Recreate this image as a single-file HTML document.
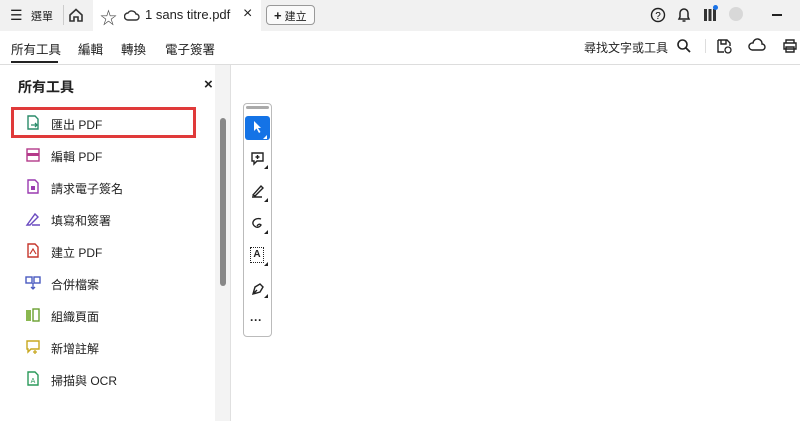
<!DOCTYPE html>
<html><head><meta charset="utf-8"><style>
*{margin:0;padding:0;box-sizing:border-box}
body{width:800px;height:421px;overflow:hidden;background:#fff;font-family:"Liberation Sans","Noto Sans CJK TC",sans-serif;color:#222;position:relative}
.a{position:absolute}
.t{font-size:12px}
</style></head><body>
<div class="a" style="left:0;top:0;width:800px;height:31px;background:#f1f1f1"></div>
<div class="a" style="left:93px;top:0;width:168px;height:31px;background:#fff"></div>
<div class="a t" style="left:10px;top:7px;font-size:14px">☰</div>
<div class="a" style="left:31px;top:8px;font-size:11px">選單</div>
<div class="a" style="left:63px;top:5px;width:1px;height:20px;background:#ccc"></div>
<svg class="a" style="left:68px;top:7px" width="16" height="16" viewBox="0 0 16 16"><path d="M2 8 L8 2.5 L14 8 V14 H10 V10 H6 V14 H2Z" fill="none" stroke="#333" stroke-width="1.6"/></svg>
<div class="a" style="left:100px;top:4px;font-size:17px;color:#444">☆</div>
<svg class="a" style="left:124px;top:8px" width="16" height="14" viewBox="0 0 16 14"><path d="M4 12 H12 A3 3 0 0 0 12 6 A4.5 4.5 0 0 0 4 5 A3.5 3.5 0 0 0 4 12Z" fill="none" stroke="#333" stroke-width="1.4"/></svg>
<div class="a" style="left:145px;top:7px;font-size:13px">1 sans titre.pdf</div>
<div class="a" style="left:243px;top:5px;font-size:16px">×</div>
<div class="a" style="left:266px;top:5px;width:49px;height:20px;border:1px solid #999;border-radius:4px;background:#fafafa;font-size:11px;padding:2px 0 0 7px"><b style="font-size:13px">+</b> 建立</div>
<svg class="a" style="left:650px;top:7px" width="16" height="16"><circle cx="8" cy="8" r="6.5" fill="none" stroke="#222" stroke-width="1.4"/><text x="8" y="12" font-size="10" text-anchor="middle" font-family="Liberation Sans">?</text></svg>
<svg class="a" style="left:676px;top:6px" width="16" height="18"><path d="M3 13 H13 L12 11 V7 A4 4 0 0 0 4 7 V11Z M6.5 15 H9.5" fill="none" stroke="#222" stroke-width="1.5"/></svg>
<div class="a" style="left:704px;top:9px;width:12px;height:12px;background:repeating-linear-gradient(90deg,#333 0 3px,transparent 3px 4.5px);"></div>
<div class="a" style="left:713px;top:5px;width:5px;height:5px;border-radius:50%;background:#1a73e8"></div>
<div class="a" style="left:729px;top:7px;width:14px;height:14px;border-radius:50%;background:#d8d8d8"></div>
<div class="a" style="left:772px;top:14px;width:10px;height:2px;background:#222"></div>

<div class="a" style="left:0;top:64px;width:800px;height:1px;background:#ddd"></div>
<div class="a" style="left:11px;top:39px;font-size:12.5px">所有工具</div>
<div class="a" style="left:11px;top:61px;width:47px;height:2px;background:#222"></div>
<div class="a" style="left:78px;top:39px;font-size:12.5px">編輯</div>
<div class="a" style="left:121px;top:39px;font-size:12.5px">轉換</div>
<div class="a" style="left:165px;top:39px;font-size:12.5px">電子簽署</div>
<div class="a" style="left:584px;top:39px;font-size:12px">尋找文字或工具</div>
<svg class="a" style="left:676px;top:38px" width="16" height="16"><circle cx="6.5" cy="6.5" r="4.5" fill="none" stroke="#222" stroke-width="1.6"/><path d="M10 10 L14 14" stroke="#222" stroke-width="1.8"/></svg>
<div class="a" style="left:705px;top:39px;width:1px;height:14px;background:#ddd"></div>
<svg class="a" style="left:716px;top:38px" width="16" height="16"><path d="M2 2 H11 L14 5 V8 M2 2 V14 H8 M5 2 V6 H10 V2" fill="none" stroke="#222" stroke-width="1.4"/><circle cx="12" cy="12" r="3" fill="none" stroke="#222" stroke-width="1.3"/></svg>
<svg class="a" style="left:748px;top:38px" width="18" height="16"><path d="M4 12 H14 A3 3 0 0 0 14 6 A4.5 4.5 0 0 0 5 5 A3.5 3.5 0 0 0 4 12" fill="none" stroke="#222" stroke-width="1.4"/></svg>
<svg class="a" style="left:781px;top:38px" width="18" height="16"><path d="M5 5 V2 H13 V5 M3 5 H15 V11 H3Z M5 9 H13 V14 H5Z" fill="none" stroke="#222" stroke-width="1.4"/></svg>

<div class="a" style="left:215px;top:65px;width:15px;height:356px;background:#f3f3f3"></div>
<div class="a" style="left:220px;top:118px;width:6px;height:168px;background:#888;border-radius:3px"></div>
<div class="a" style="left:230px;top:65px;width:1px;height:356px;background:#e0e0e0"></div>

<div class="a" style="left:18px;top:77px;font-size:14px;font-weight:bold">所有工具</div>
<div class="a" style="left:204px;top:76px;font-size:15px;font-weight:bold">×</div>
<div class="a" style="left:11px;top:107px;width:185px;height:31px;border:3px solid #e03a3a"></div>

<svg class="a" style="left:25px;top:115px" width="16" height="16"><path d="M3 1 H10 L13 4 V14 H3Z" fill="none" stroke="#2a8c6a" stroke-width="1.4"/><path d="M6 10 H12 M10 8 L12 10 L10 12" fill="none" stroke="#2a8c6a" stroke-width="1.3"/></svg>
<div class="a t" style="left:51px;top:116px">匯出 PDF</div>
<svg class="a" style="left:25px;top:147px" width="16" height="16"><rect x="2" y="2" width="12" height="12" fill="none" stroke="#b43a8a" stroke-width="1.4"/><rect x="2" y="6" width="12" height="3" fill="#b43a8a"/></svg>
<div class="a t" style="left:51px;top:148px">編輯 PDF</div>
<svg class="a" style="left:25px;top:179px" width="16" height="16"><path d="M3 1 H10 L13 4 V14 H3Z" fill="none" stroke="#9a3ab0" stroke-width="1.4"/><rect x="6" y="7" width="4" height="4" fill="#9a3ab0"/></svg>
<div class="a t" style="left:51px;top:180px">請求電子簽名</div>
<svg class="a" style="left:25px;top:211px" width="16" height="16"><path d="M2 14 L10 3 L13 6 L5 14 Z M7 14 H15" fill="none" stroke="#6b4bc0" stroke-width="1.4"/></svg>
<div class="a t" style="left:51px;top:212px">填寫和簽署</div>
<svg class="a" style="left:25px;top:243px" width="16" height="16"><path d="M3 1 H10 L13 4 V14 H3Z" fill="none" stroke="#c6362c" stroke-width="1.4"/><path d="M5 11 L8 6 L11 11" fill="none" stroke="#c6362c" stroke-width="1.2"/></svg>
<div class="a t" style="left:51px;top:244px">建立 PDF</div>
<svg class="a" style="left:25px;top:275px" width="16" height="16"><rect x="1" y="2" width="6" height="6" fill="none" stroke="#4a5ac0" stroke-width="1.4"/><rect x="9" y="2" width="6" height="6" fill="none" stroke="#4a5ac0" stroke-width="1.4"/><path d="M8 8 V14 M6 12 L8 14 L10 12" fill="none" stroke="#4a5ac0" stroke-width="1.3"/></svg>
<div class="a t" style="left:51px;top:276px">合併檔案</div>
<svg class="a" style="left:25px;top:307px" width="16" height="16"><rect x="1" y="3" width="5" height="11" fill="#8ab850"/><rect x="8" y="2" width="6" height="12" fill="none" stroke="#6aa030" stroke-width="1.4"/></svg>
<div class="a t" style="left:51px;top:308px">組織頁面</div>
<svg class="a" style="left:25px;top:339px" width="16" height="16"><path d="M2 2 H14 V10 H6 L3 13 V10 H2Z" fill="none" stroke="#c8a820" stroke-width="1.4"/><path d="M10 11 V15 M8 13 H12" stroke="#c8a820" stroke-width="1.3"/></svg>
<div class="a t" style="left:51px;top:340px">新增註解</div>
<svg class="a" style="left:25px;top:371px" width="16" height="16"><path d="M3 1 H10 L13 4 V14 H3Z" fill="none" stroke="#2a9a5a" stroke-width="1.4"/><text x="8" y="12" font-size="7" text-anchor="middle" fill="#2a9a5a" font-family="Liberation Sans">A</text></svg>
<div class="a t" style="left:51px;top:372px">掃描與 OCR</div>

<div class="a" style="left:243px;top:103px;width:29px;height:234px;border:1px solid #bbb;border-radius:4px;background:#fff"></div>
<div class="a" style="left:246px;top:106px;width:23px;height:3px;background:#aaa;border-radius:2px"></div>
<div class="a" style="left:245px;top:116px;width:25px;height:24px;background:#1473e6;border-radius:3px"></div>
<svg class="a" style="left:251px;top:120px" width="14" height="16"><path d="M3 1 V11 L5.5 8.5 L8 13 L9.5 12 L7 8 H10Z" fill="#fff"/></svg>
<svg class="a" style="left:250px;top:151px" width="16" height="16"><path d="M2 2 H13 V10 H7 L4 13 V10 H2Z M7.5 4 V8 M5.5 6 H9.5" fill="none" stroke="#222" stroke-width="1.4"/></svg>
<svg class="a" style="left:250px;top:183px" width="16" height="16"><path d="M3 12 L11 3 L13 5 L5 13 Z M2 14 H12" fill="none" stroke="#222" stroke-width="1.4"/></svg>
<svg class="a" style="left:250px;top:216px" width="16" height="14"><path d="M11 3 A5 4 0 1 0 6 11 Q9 12 11 9 Q9 7 7 10" fill="none" stroke="#222" stroke-width="1.4"/></svg>
<div class="a" style="left:250px;top:247px;width:14px;height:16px;border:1.5px dotted #222;font-size:10px;font-weight:bold;text-align:center;line-height:13px">A</div>
<svg class="a" style="left:250px;top:281px" width="16" height="16"><path d="M3 13 L5 6 L10 3 L13 6 L10 11 Z M3 13 L7 9" fill="none" stroke="#222" stroke-width="1.4"/></svg>
<div class="a" style="left:250px;top:313px;font-size:12px;font-weight:bold">···</div>
<div class="a" style="left:263px;top:135px;border-left:4px solid transparent;border-bottom:4px solid #fff"></div>
<div class="a" style="left:264px;top:165px;border-left:4px solid transparent;border-bottom:4px solid #222"></div>
<div class="a" style="left:264px;top:198px;border-left:4px solid transparent;border-bottom:4px solid #222"></div>
<div class="a" style="left:264px;top:230px;border-left:4px solid transparent;border-bottom:4px solid #222"></div>
<div class="a" style="left:264px;top:262px;border-left:4px solid transparent;border-bottom:4px solid #222"></div>
<div class="a" style="left:264px;top:294px;border-left:4px solid transparent;border-bottom:4px solid #222"></div>
</body></html>
